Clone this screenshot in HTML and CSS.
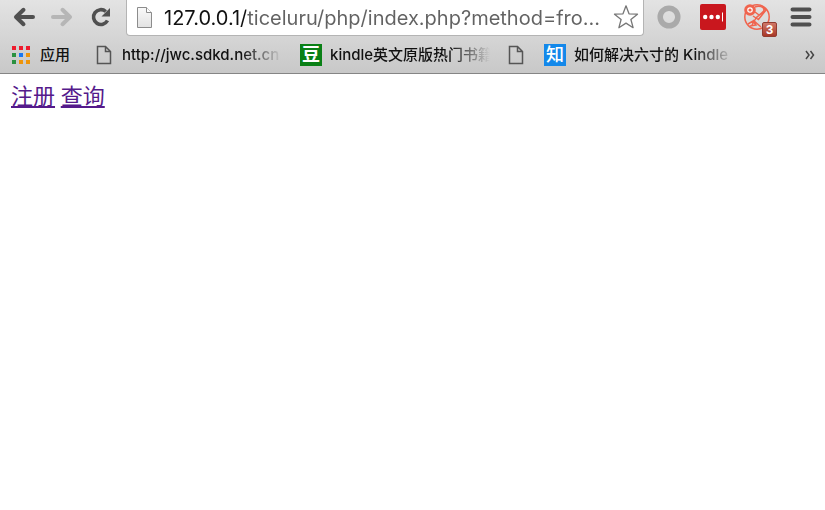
FILE: index.html
```html
<!DOCTYPE html>
<html lang="zh-CN">
<head>
<meta charset="utf-8">
<title>index.php</title>
<link rel="stylesheet" href="styles.css">
</head>
<body>
<header class="chrome">
  <div class="toolbar">
    <button class="tool back" aria-label="后退">
      <svg width="24" height="24" viewBox="0 0 24 24"><path d="M21 12H5M11.500 4.800L4 12l7.500 7.200" fill="none" stroke="#505050" stroke-width="4" stroke-linecap="round" stroke-linejoin="round"/></svg>
    </button>
    <button class="tool forward" aria-label="前进">
      <svg width="24" height="24" viewBox="0 0 24 24"><path d="M3 12h16M12.500 4.800L20 12l-7.500 7.200" fill="none" stroke="#b6b6b6" stroke-width="4" stroke-linecap="round" stroke-linejoin="round"/></svg>
    </button>
    <button class="tool reload" aria-label="重新加载">
      <svg width="24" height="24" viewBox="0 0 24 24"><path d="M19.500 15.500A7.400 7.400 0 1 1 17.800 6.500" fill="none" stroke="#505050" stroke-width="3.600"/><path d="M22 3v8.500h-8.500z" fill="#505050"/></svg>
    </button>
    <div class="omnibox">
      <svg width="18" height="24" viewBox="0 0 18 24"><defs><linearGradient id="paper" x2="0" y2="1"><stop stop-color="#fafafa"/><stop offset="1" stop-color="#e2e2e2"/></linearGradient></defs><path d="M1.500 2.500h9l5 5V22.500h-14z" fill="url(#paper)" stroke="#8c8c8c"/><path d="M10.500 2.500v5h5" fill="#fff" stroke="#8c8c8c"/></svg>
      <input class="url" type="text" aria-label="地址" value="127.0.0.1/ticeluru/php/index.php?method=fro...">
      <button class="star" aria-label="收藏">
        <svg width="26" height="26" viewBox="0 0 26 26"><path d="M13 1.800l3 8 8.500.4-6.600 5.300 2.200 8.200L13 19.100l-7.100 4.600 2.200-8.200L1.500 10.200l8.500-.4z" fill="#fff" stroke="#777" stroke-width="1.300" stroke-linejoin="round"/></svg>
      </button>
    </div>
    <div class="extensions">
      <button class="ext" aria-label="圆环">
        <svg width="26" height="26" viewBox="0 0 26 26"><circle cx="13" cy="13" r="8.800" fill="none" stroke="#aaa" stroke-width="5.500"/></svg>
      </button>
      <button class="ext" aria-label="密码">
        <svg width="26" height="26" viewBox="0 0 26 26"><rect width="26" height="26" rx="2" fill="#c9171e"/><circle cx="5.200" cy="13" r="2.200" fill="#fff"/><circle cx="11.500" cy="13" r="2.200" fill="#fff"/><circle cx="17.800" cy="13" r="2.200" fill="#fff"/><path d="M22.500 8.500v9" stroke="#fff"/></svg>
      </button>
      <button class="ext" aria-label="代理">
        <svg width="26" height="26" viewBox="0 0 26 26" fill="none" stroke="#f0644e" stroke-width="1.500"><circle cx="13" cy="13" r="12.200"/><path d="M11 3c4-2 9 0 9 3 0 2-5 5-8 8M18 2l4 4-8 10M11 8l4 3M9 12l6 4M12 14l-4 7M9 16l8 7M4 20l5-3 3 4-6 1"/><circle cx="6" cy="6" r="4.300" fill="#fff" stroke-width="3"/><circle cx="6" cy="6" r="1.600" fill="#f0644e" stroke="none"/></svg>
        <span class="badge">3</span>
      </button>
      <button class="ext" aria-label="菜单">
        <svg width="26" height="26" viewBox="0 0 26 26"><path d="M4.500 5.500h17M4.500 13h17M4.500 20.500h17" stroke="#505050" stroke-width="4" stroke-linecap="round"/></svg>
      </button>
    </div>
  </div>
  <nav class="bookmarks">
    <a class="mark apps" href="#">
      <svg width="18" height="18" viewBox="0 0 18 18"><path d="M0 0h4v4H0zM7 0h4v4H7zM14 0h4v4h-4z" fill="#ee1c2e"/><path d="M0 7h4v4H0zM0 14h4v4H0z" fill="#2a9140"/><path d="M7 7h4v4H7z" fill="#1877f2"/><path d="M14 7h4v4h-4zM7 14h4v4H7zM14 14h4v4h-4z" fill="#ee950b"/></svg>
      <span>应用</span>
    </a>
    <a class="mark" href="#">
      <svg width="18" height="20" viewBox="0 0 18 20"><path d="M1.500 1.500h8l5 5v12h-13zM9.500 1.500v5h5" fill="none" stroke="#555" stroke-width="1.500"/></svg>
      <span class="title">http://jwc.sdkd.net.cn</span>
    </a>
    <a class="mark" href="#">
      <span class="favicon douban">豆</span>
      <span class="title">kindle英文原版热门书籍</span>
    </a>
    <a class="mark" href="#" aria-label="空白书签">
      <svg width="18" height="20" viewBox="0 0 18 20"><path d="M1.500 1.500h8l5 5v12h-13zM9.500 1.500v5h5" fill="none" stroke="#555" stroke-width="1.500"/></svg>
    </a>
    <a class="mark" href="#">
      <span class="favicon zhihu">知</span>
      <span class="title">如何解决六寸的 Kindle</span>
    </a>
    <button class="more" aria-label="更多书签">
      <svg width="10" height="10" viewBox="0 0 10 10"><path d="M1 1l3 4-3 4M5.500 1l3 4-3 4" fill="none" stroke="#444" stroke-width="1.500"/></svg>
    </button>
  </nav>
</header>
<main class="page">
  <a href="#">注册</a> <a href="#">查询</a>
</main>
</body>
</html>
```
FILE: styles.css
```css
* { box-sizing: border-box; }

body {
  margin: 0;
  background: #fff;
  font-family: "Noto Sans", "Noto Sans CJK SC", sans-serif;
}

button {
  display: flex;
  padding: 0;
  border: 0;
  background: none;
}

svg { display: block; flex: none; }

.chrome {
  background: linear-gradient(#e3e3e3, #c8c8c8);
  border-bottom: 1px solid #858585;
}

.toolbar {
  display: flex;
  align-items: center;
  height: 36px;
  padding: 0 11px 2px 12px;
}

.tool { margin-right: 14px; }

.omnibox {
  display: flex;
  flex: 1;
  align-items: center;
  height: 36px;
  margin-bottom: -2px;
  min-width: 0;
  padding: 0 4px 2px 9px;
  background: #fff;
  border: 1px solid #b4b4b4;
  border-top: 0;
  border-radius: 0 0 4px 4px;
}

/* The host part is darker than the path that follows it. */
.url {
  flex: 1;
  min-width: 0;
  margin-left: 10px;
  padding: 2px 0 0;
  border: 0;
  outline: 0;
  font: 20px/30px Inter, "Noto Sans CJK SC", sans-serif;
  color: transparent;
  background: linear-gradient(90deg, #111 82px, #626262 82px) text;
}

.extensions {
  display: flex;
  gap: 18px;
  margin-left: 12px;
}

.ext { position: relative; }

.badge {
  position: absolute;
  left: 18px;
  top: 18px;
  width: 15px;
  height: 15px;
  border: 1px solid #923c30;
  border-radius: 2px;
  background: linear-gradient(#d07868, #a83828);
  color: #fff;
  font: bold 13px/14px "Liberation Sans", sans-serif;
  text-align: center;
}

.bookmarks {
  display: flex;
  align-items: center;
  height: 37px;
  padding: 0 10px 0 12px;
  font: 500 15px/24px Inter, "Noto Sans CJK SC", sans-serif;
}

.mark {
  display: flex;
  align-items: center;
  gap: 8px;
  margin-right: 18px;
  color: #111;
  text-decoration: none;
  white-space: nowrap;
}

.mark.apps { gap: 10px; margin-right: 26px; }

.title {
  width: 160px;
  overflow: hidden;
  mask-image: linear-gradient(90deg, #000 120px, transparent);
}

.favicon {
  width: 22px;
  height: 22px;
  color: #fff;
  font-size: 18px;
  line-height: 21px;
  text-align: center;
}

.douban { background: #0a8016; font-weight: bold; }
.zhihu { background: #1388ea; }

.more { margin-left: auto; }

.page {
  padding: 6px 11px;
  font-size: 22px;
  line-height: 30px;
}

.page a { color: #551a8b; }
```
